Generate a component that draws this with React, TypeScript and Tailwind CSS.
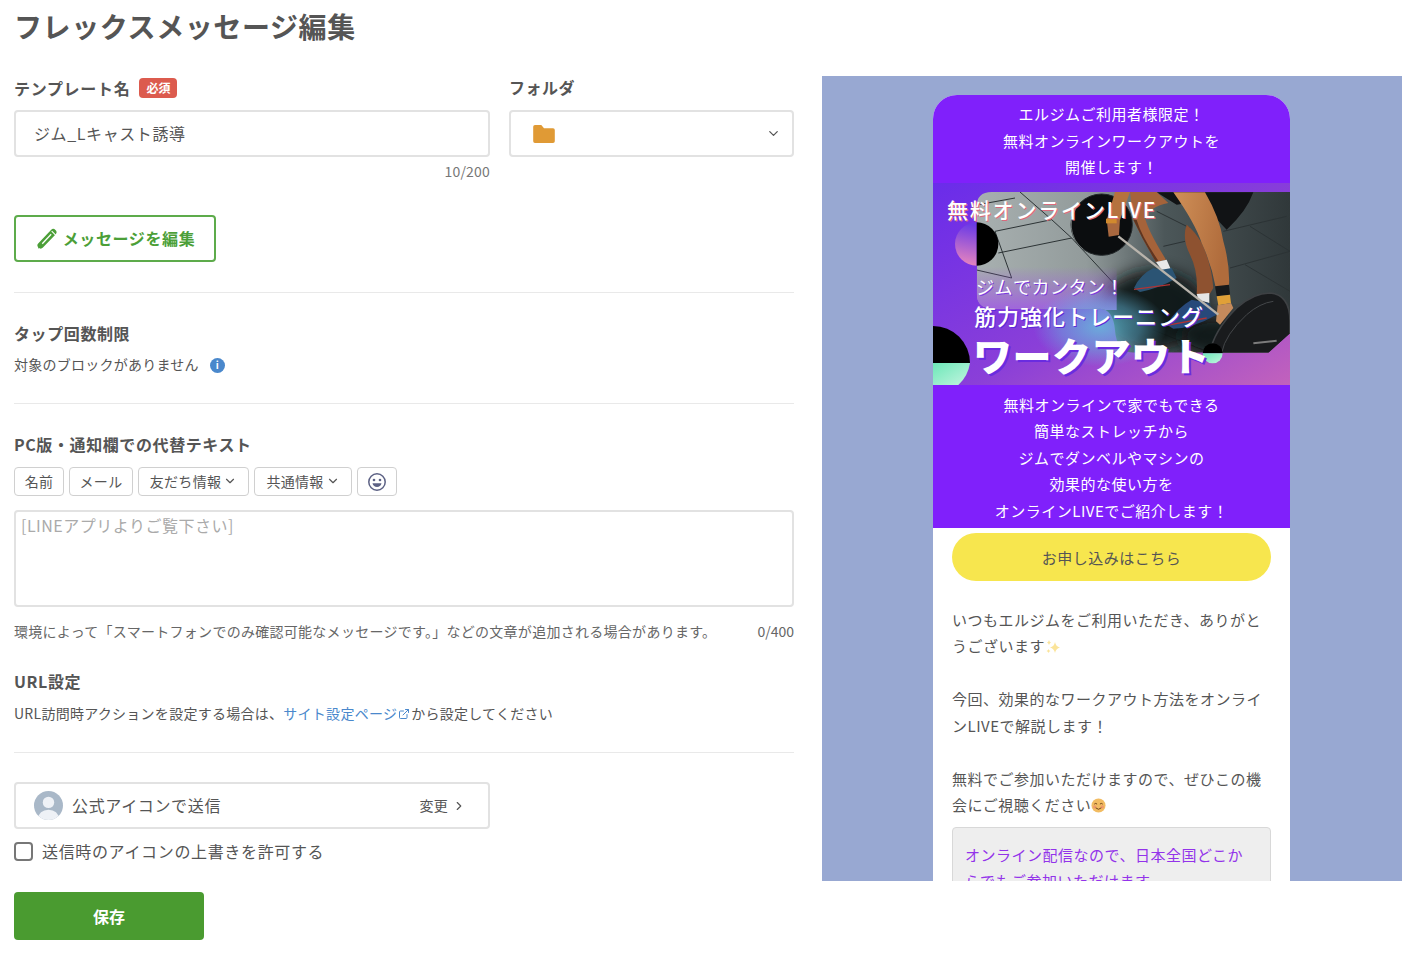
import { ChevronDown, ChevronRight, ExternalLink } from "lucide-react";

const font = { fontFamily: '"Noto Sans CJK JP", "Noto Sans", sans-serif' };

function Divider({ className }: { className: string }) {
  return <div className={`h-px bg-[#e9e9e9] ${className}`} />;
}

function Heading({ children, className }: { children: React.ReactNode; className: string }) {
  return <div className={`h-6 text-[16px] leading-[22px] font-bold tracking-[0.6px] text-[#555] ${className}`}>{children}</div>;
}

function Chip({ label, menu, className }: { label: string; menu?: boolean; className: string }) {
  return (
    <button className={`flex h-[29px] items-center justify-center gap-0.5 rounded border border-[#d0d0d0] bg-white pb-px text-[14px] tracking-[0.3px] text-[#555] ${className}`}>
      {label}
      {menu && <ChevronDown className="h-[14px] w-[14px] text-[#555]" strokeWidth={2} />}
    </button>
  );
}

function Banner() {
  return (
    <div className="relative h-[202px] overflow-hidden bg-[#7b34e0]">
      {/* coords below are in 3x pixels of the reference crop */}
      <svg viewBox="39 39 1071 606" className="block h-[202px] w-[357px]">
        <defs>
          <linearGradient id="bg" x1="0" y1="0" x2="1" y2="1">
            <stop offset="0" stopColor="#6a2cea" />
            <stop offset="0.55" stopColor="#8a3fd8" />
            <stop offset="1" stopColor="#c262bc" />
          </linearGradient>
          <linearGradient id="floor" x1="0" y1="0" x2="1" y2="0">
            <stop offset="0" stopColor="#a8b0b0" />
            <stop offset="0.35" stopColor="#929b9b" />
            <stop offset="0.6" stopColor="#4c5759" />
            <stop offset="1" stopColor="#30383a" />
          </linearGradient>
          <radialGradient id="blob" cx="0.5" cy="0.5" r="0.5">
            <stop offset="0" stopColor="#62c6dc" stopOpacity="0.8" />
            <stop offset="0.6" stopColor="#62b8dc" stopOpacity="0.45" />
            <stop offset="1" stopColor="#62b8dc" stopOpacity="0" />
          </radialGradient>
          <linearGradient id="fade" x1="0" y1="0" x2="0" y2="1">
            <stop offset="0" stopColor="#a060e0" stopOpacity="0" />
            <stop offset="1" stopColor="#a060e0" stopOpacity="0.95" />
          </linearGradient>
          <linearGradient id="ball" x1="0.3" y1="0" x2="0.2" y2="1">
            <stop offset="0" stopColor="#6a3ae6" />
            <stop offset="1" stopColor="#ec88bc" />
          </linearGradient>
          <linearGradient id="mint" x1="0" y1="0" x2="1" y2="1">
            <stop offset="0" stopColor="#6ce8b8" />
            <stop offset="1" stopColor="#c4f4e0" />
          </linearGradient>
          <linearGradient id="skin" x1="0" y1="0" x2="1" y2="0.3">
            <stop offset="0" stopColor="#d09058" />
            <stop offset="1" stopColor="#b06c3c" />
          </linearGradient>
          <filter id="soft" x="-30%" y="-30%" width="160%" height="160%">
            <feGaussianBlur stdDeviation="22" />
          </filter>
          <clipPath id="photo">
            <path d="M215 66H1110V490L1045 548H640Q590 548 585 480Q580 418 540 416H220Q170 416 170 370V110Q170 66 215 66Z" />
          </clipPath>
        </defs>
        <rect x="39" y="39" width="1071" height="606" fill="url(#bg)" />
        <g clipPath="url(#photo)">
          <rect x="170" y="66" width="940" height="482" fill="url(#floor)" />
          <path d="M175 104L285 84M225 184L395 149M235 249L455 204M225 184L275 324M395 149L455 204L585 344M300 66L395 149M170 300L275 324M910 184L1100 139M990 169L1110 244M930 294L1110 244M975 284L1110 364M710 124L810 174M730 229L795 214M700 480L850 540" stroke="#2c3335" strokeWidth="3" fill="none" />
          {/* shadow on the floor */}
          <ellipse cx="700" cy="420" rx="160" ry="120" fill="#0d1214" opacity="0.92" filter="url(#soft)" />
          <ellipse cx="900" cy="500" rx="120" ry="60" fill="#0d1214" opacity="0.9" filter="url(#soft)" />
          <rect x="170" y="290" width="420" height="130" fill="url(#fade)" />
          {/* shorts */}
          <path d="M710 67H1000Q980 124 920 179L840 94L770 104Z" fill="#111315" />
          {/* far leg */}
          <path d="M630 66H710L745 99Q690 109 675 144Q685 184 738 269L708 276Q670 214 640 149Z" fill="#a5633a" />
          <path d="M650 150Q665 200 715 272L708 276Q670 214 640 149Z" fill="#5f3520" />
          <path d="M708 276L740 269L755 304L725 299Z" fill="#e8e8e8" />
          <path d="M642 354Q660 314 700 294L725 299L755 294L770 324Q720 354 660 366Z" fill="#2b5474" />
          <path d="M642 358L750 344" stroke="#b03434" strokeWidth="4" />
          {/* near leg */}
          <path d="M800 164Q825 184 845 219Q875 284 880 354L868 374L830 372Q835 304 810 254Q785 204 800 164Z" fill="#8e5230" />
          <path d="M830 372L868 369L868 399L835 389Z" fill="#e6e6e6" />
          <path d="M740 464Q770 414 815 389L865 399L890 434Q820 474 760 476Z" fill="#27497a" />
          <path d="M740 466L860 444" stroke="#b03434" strokeWidth="4" />
          <path d="M760 67H855Q900 144 910 214Q930 284 927 346L887 352Q875 284 845 219Q825 159 760 67Z" fill="url(#skin)" />
          <path d="M885 349L927 344L930 374L890 379Z" fill="#17191b" />
          <path d="M890 379L930 374L933 399L895 406Z" fill="#e0a038" />
          <path d="M893 406L933 399L940 414Q920 439 900 464L888 454Z" fill="#c48a5c" />
          {/* bar and plates */}
          <circle cx="545" cy="164" r="92" fill="#0b0d0f" stroke="#23282a" strokeWidth="3" />
          <path d="M480 100A92 92 0 0 0 490 238" fill="none" stroke="#8f9696" strokeWidth="2" />
          <path d="M585 66H630L600 150L560 150Z" fill="#b5723f" />
          <path d="M560 148L600 148L597 195L566 200Z" fill="#a9683f" />
          <rect x="558" y="146" width="32" height="14" fill="#d18a2e" />
          <path d="M595 199L895 434" stroke="#b9b4ac" strokeWidth="7" />
          <path d="M870 549Q880 484 950 414Q1000 369 1050 369Q1110 374 1110 454V549Z" fill="#191b1d" stroke="#3e4144" strokeWidth="5" />
          <path d="M905 549Q915 494 980 434Q1020 399 1060 394" fill="none" stroke="#44474a" strokeWidth="3" />
          <path d="M1000 520L1070 512" stroke="#7c7c7c" strokeWidth="6" />
        </g>
        <ellipse cx="540" cy="470" rx="200" ry="120" fill="url(#blob)" />
        <path d="M170 157A65 65 0 0 0 170 287Z" fill="url(#ball)" />
        <path d="M170 157A65 65 0 0 1 170 287Z" fill="#000" />
        <path d="M39 468A111 111 0 0 1 150 579H39Z" fill="#000" />
        <path d="M39 579H150A111 111 0 0 1 115 645H39Z" fill="url(#mint)" />
        <path d="M848 550A30 30 0 0 1 908 550Z" fill="#000" />
        <path d="M848 550H908A30 30 0 0 1 848 550Z" fill="url(#mint)" />
      </svg>
      <span className="absolute left-[14px] top-[12px] text-[21px] leading-[28px] font-medium tracking-[1.8px] whitespace-nowrap text-white [text-shadow:1px_1px_0_#d96a7c]">
        無料オンラインLIVE
      </span>
      <span className="absolute left-[43px] top-[93px] text-[18px] leading-[20px] font-normal whitespace-nowrap text-white [text-shadow:1px_1px_0_#7a3ae0]">
        ジムでカンタン！
      </span>
      <span className="absolute left-[41px] top-[119px] text-[22px] leading-[26px] font-medium tracking-[1px] whitespace-nowrap text-white [text-shadow:1px_1px_0_#5a2ad8]">
        筋力強化トレーニング
      </span>
      <span className="absolute left-[40px] top-[150px] text-[39px] leading-[42px] font-black whitespace-nowrap text-white [text-shadow:2px_2px_0_#6a2ce0]">
        ワークアウト
      </span>
    </div>
  );
}

function Sparkle() {
  return (
    <svg viewBox="0 0 16 16" className="inline-block h-[16px] w-[16px] align-[-3px]">
      <path d="M10 3Q10.8 7.5 15 8.5Q10.8 9.5 10 14Q9.2 9.5 5 8.5Q9.2 7.5 10 3Z" fill="#fbe49a" />
      <path d="M4 1Q4.4 3 6 3.5Q4.4 4 4 6Q3.6 4 2 3.5Q3.6 3 4 1Z" fill="#fbe49a" />
      <path d="M3.5 10Q3.8 11.5 5.5 12Q3.8 12.5 3.5 14Q3.2 12.5 1.5 12Q3.2 11.5 3.5 10Z" fill="#fbe49a" />
    </svg>
  );
}

function Blush() {
  return (
    <svg viewBox="0 0 16 16" className="inline-block h-[15px] w-[15px] align-[-2px]">
      <circle cx="8" cy="8" r="7.5" fill="#f2bc62" />
      <circle cx="4" cy="9.5" r="1.8" fill="#ef9a6c" />
      <circle cx="12" cy="9.5" r="1.8" fill="#ef9a6c" />
      <path d="M3.5 6.5Q5 5 6.5 6.5M9.5 6.5Q11 5 12.5 6.5M5 10.5Q8 13.5 11 10.5" stroke="#6b3f1a" strokeWidth="1" fill="none" />
    </svg>
  );
}

function Preview() {
  return (
    <div className="h-[805px] w-[580px] overflow-hidden bg-[#98a8d2] pt-[19px] pl-[111px]">
      <div className="w-[357px] overflow-hidden rounded-t-[24px] bg-white text-[15px] leading-[26.5px] tracking-[0.5px]">
        <div className="bg-[#8020fb] pt-[6px] pb-[2.5px] text-center text-white">
          エルジムご利用者様限定！<br />無料オンラインワークアウトを<br />開催します！
        </div>
        <Banner />
        <div className="bg-[#8020fb] pt-[6.5px] pb-[3.5px] text-center text-white">
          無料オンラインで家でもできる<br />簡単なストレッチから<br />ジムでダンベルやマシンの<br />効果的な使い方を<br />オンラインLIVEでご紹介します！
        </div>
        <div className="mx-[19px] mt-[5px] flex h-[48px] items-center justify-center rounded-full bg-[#f7e64e] pt-[3px] text-[#555]">
          お申し込みはこちら
        </div>
        <div className="mx-[19px] mt-[26px] text-[#555]">
          いつもエルジムをご利用いただき、ありがと<br />うございます<Sparkle /><br /><br />
          今回、効果的なワークアウト方法をオンライ<br />ンLIVEで解説します！<br /><br />
          無料でご参加いただけますので、ぜひこの機<br />会にご視聴ください<Blush />
        </div>
        <div className="mx-[19px] mt-[8px] rounded-t border border-[#d8d8d8] bg-[#eeeeee] px-[12px] pt-[14px] pb-4 text-[#9333ea]">
          オンライン配信なので、日本全国どこか<br />らでもご参加いただけます
        </div>
      </div>
    </div>
  );
}

export default function App() {
  return (
    <div className="min-h-[956px] bg-white pl-[14px] text-[#555]" style={font}>
      <h1 className="h-[54px] text-[28px] leading-[52px] font-bold tracking-[0.6px] text-[#555]">フレックスメッセージ編集</h1>
      <div className="mt-[22px] flex gap-[28px]">
        <div className="w-[780px]">
          <div className="flex gap-[19px]">
            <div className="w-[476px]">
              <div className="flex h-6 items-center gap-[9px]">
                <span className="text-[16px] leading-[22px] font-bold tracking-[0.7px]">テンプレート名</span>
                <span className="flex h-5 w-[38px] items-center justify-center rounded-sm bg-[#dc5b4e] text-[12px] font-bold text-white">必須</span>
              </div>
              <div className="mt-[10px] flex h-[47px] items-center rounded border-2 border-[#e2e2e2] pb-[2px] pl-[18px] text-[16px] tracking-[0.6px]">ジム_Lキャスト誘導</div>
              <div className="mt-[5px] h-5 text-right text-[14px] leading-[18px] tracking-[0.2px] text-[#777]">10/200</div>
            </div>
            <div className="w-[285px]">
              <div className="h-6 text-[16px] leading-[22px] font-bold tracking-[0.5px]">フォルダ</div>
              <div className="mt-[10px] flex h-[47px] items-center justify-between rounded border-2 border-[#e2e2e2] pr-[11px] pl-[21px]">
                <svg viewBox="0 0 24 20" className="h-[18px] w-[24px]">
                  <path d="M2 0H9L12 3.5H22A2 2 0 0 1 24 5.5V18A2 2 0 0 1 22 20H2A2 2 0 0 1 0 18V2A2 2 0 0 1 2 0Z" fill="#e09a35" />
                </svg>
                <ChevronDown className="h-[15px] w-[15px] text-[#555]" strokeWidth={2} />
              </div>
            </div>
          </div>
          <button className="mt-[33px] flex h-[47px] w-[202px] items-center justify-center gap-[5px] rounded border-2 border-[#5dab4b] bg-white pb-[2px] pl-[2px] text-[16px] font-bold tracking-[0.6px] text-[#4c9f38]">
            <svg viewBox="0 0 20 20" className="mt-[2px] h-[21px] w-[21px]">
              <path d="M3.5 16.5L15.5 4" stroke="#4c9f38" strokeWidth="6" strokeLinecap="round" />
              <path d="M1 19.5L2 14.5L5.5 18Z" fill="#4c9f38" />
              <path d="M5 15L13.5 6" stroke="#fff" strokeWidth="1.2" />
              <path d="M14 3L18 7" stroke="#fff" strokeWidth="1" />
            </svg>
            メッセージを編集
          </button>
          <Divider className="mt-[30px]" />
          <Heading className="mt-[29px]">タップ回数制限</Heading>
          <div className="mt-[9px] flex h-5 items-center gap-[11px] text-[14px] leading-[18px] tracking-[0.25px]">
            <span className="pb-[2px]">対象のブロックがありません</span>
            <span className="flex h-[15px] w-[15px] items-center justify-center rounded-full bg-[#4a88cc] text-[10px] leading-none font-bold text-white">i</span>
          </div>
          <Divider className="mt-[28px]" />
          <Heading className="mt-[29px]">PC版・通知欄での代替テキスト</Heading>
          <div className="mt-[10px] flex gap-[5px]">
            <Chip label="名前" className="w-[50px]" />
            <Chip label="メール" className="w-[64px]" />
            <Chip label="友だち情報" menu className="w-[111px]" />
            <Chip label="共通情報" menu className="w-[98px]" />
            <button className="flex h-[29px] w-[40px] items-center justify-center rounded border border-[#d0d0d0] bg-white">
              <svg viewBox="0 0 20 20" className="h-[20px] w-[20px]">
                <circle cx="10" cy="10" r="8.2" fill="none" stroke="#5d6285" strokeWidth="1.5" />
                <circle cx="7" cy="8" r="1.3" fill="#5d6285" />
                <circle cx="13" cy="8" r="1.3" fill="#5d6285" />
                <path d="M5.5 11.2H14.5Q13.5 15 10 15Q6.5 15 5.5 11.2Z" fill="#5d6285" />
              </svg>
            </button>
          </div>
          <div className="mt-[14px] h-[97px] rounded border-2 border-[#e2e2e2] px-[5px] pt-[2px] text-[16px] leading-[22px] tracking-[0.5px] text-[#aaa]">[LINEアプリよりご覧下さい]</div>
          <div className="mt-[15px] flex h-5 justify-between text-[14px] leading-[18px] text-[#666]">
            <span className="tracking-[0.28px]">環境によって「スマートフォンでのみ確認可能なメッセージです。」などの文章が追加される場合があります。</span>
            <span>0/400</span>
          </div>
          <Heading className="mt-[28px]">URL設定</Heading>
          <div className="mt-[10px] flex h-5 items-center text-[14px] leading-[18px] tracking-[0.27px]">
            <span className="pb-[2px]">URL訪問時アクションを設定する場合は、</span>
            <span className="pb-[2px] text-[#4a88cc]">サイト設定ページ</span>
            <ExternalLink className="mx-px h-3 w-3 text-[#4a88cc]" strokeWidth={2} />
            <span className="pb-[2px]">から設定してください</span>
          </div>
          <Divider className="mt-[28px]" />
          <div className="mt-[29px] flex h-[47px] w-[476px] items-center rounded border-2 border-[#e2e2e2] pr-[22px] pl-[18px]">
            <svg viewBox="0 0 28 28" className="h-[29px] w-[29px] shrink-0">
              <clipPath id="av"><circle cx="14" cy="14" r="14" /></clipPath>
              <g clipPath="url(#av)">
                <rect width="28" height="28" fill="#a9b8c8" />
                <circle cx="14" cy="11" r="5.5" fill="#eef1f6" />
                <path d="M3 28Q5 18 14 18Q23 18 25 28Z" fill="#eef1f6" />
              </g>
            </svg>
            <span className="ml-[9px] pb-px text-[16px] tracking-[0.65px]">公式アイコンで送信</span>
            <span className="ml-auto flex items-center gap-1 text-[14px] tracking-[0.2px]">
              変更
              <ChevronRight className="h-[14px] w-[14px]" strokeWidth={2} />
            </span>
          </div>
          <label className="mt-[12px] flex h-5 items-center gap-[9px] text-[16px] leading-5 tracking-[0.65px]">
            <span className="h-[19px] w-[19px] rounded border-2 border-[#777] bg-white" />
            送信時のアイコンの上書きを許可する
          </label>
          <button className="mt-[31px] h-[48px] w-[190px] rounded bg-[#4a9b30] text-[16px] font-bold text-white">保存</button>
        </div>
        <Preview />
      </div>
    </div>
  );
}
